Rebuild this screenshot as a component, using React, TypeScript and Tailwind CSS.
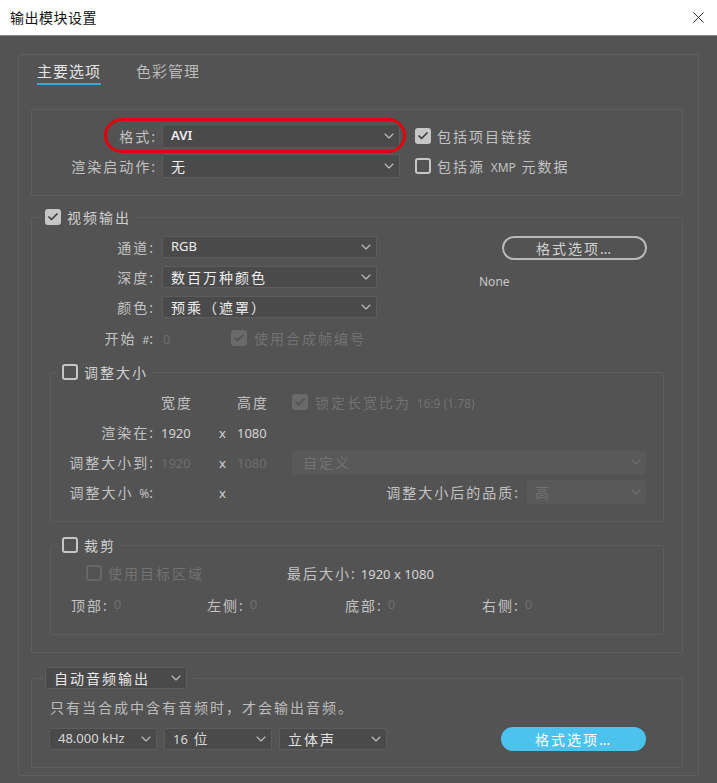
import React from 'react'
import { Check, ChevronDown, X } from 'lucide-react'
import clsx from 'clsx'

const font = "font-['Noto_Sans','Noto_Sans_CJK_SC',sans-serif]"

// CJK label text, slightly spaced like the Adobe dialog
const Cjk = ({ children, className }: { children: React.ReactNode; className?: string }) => (
  <span className={clsx('text-[14px] tracking-[2px] whitespace-nowrap', className ?? 'text-[#c2c2c2]')}>{children}</span>
)

const Num = ({ children, dim }: { children: React.ReactNode; dim?: boolean }) => (
  <span className={clsx('text-[13px] whitespace-nowrap', dim ? 'text-[#6e6e6e]' : 'text-[#d4d4d4]')}>{children}</span>
)

const Box = ({ checked, disabled }: { checked?: boolean; disabled?: boolean }) => {
  if (checked) {
    return (
      <span
        className={clsx(
          'w-4 h-4 shrink-0 rounded-[3px] flex items-center justify-center',
          disabled ? 'bg-[#6a6a6a]' : 'bg-[#c6c6c6]'
        )}
      >
        <Check size={12} strokeWidth={3.5} className={disabled ? 'text-[#525252]' : 'text-[#3c3c3c]'} />
      </span>
    )
  }
  return (
    <span
      className={clsx(
        'w-4 h-4 shrink-0 rounded-[3px] border-2',
        disabled ? 'border-[#676767]' : 'border-[#c6c6c6]'
      )}
    />
  )
}

const Select = ({
  children,
  className,
  disabled,
}: {
  children: React.ReactNode
  className: string
  disabled?: boolean
}) => (
  <div
    className={clsx(
      'flex items-center justify-between pl-[8px] pr-[2px] rounded-[2px] shrink-0',
      disabled ? 'bg-[#595959]' : 'bg-[#4a4a4a] border border-[#5c5c5c]',
      className
    )}
  >
    <div className="flex items-center">{children}</div>
    <ChevronDown size={16} strokeWidth={1.6} className={disabled ? 'text-[#707070]' : 'text-[#c0c0c0]'} />
  </div>
)

const App = () => {
  return (
    <div className={`relative w-[717px] h-[783px] overflow-hidden bg-[#535353] ${font}`}>
      {/* title bar */}
      <div className="h-[36px] bg-white border-b border-[#8a8a8a] flex items-center justify-between pl-[10px] pr-[9px]">
        <span className="text-[14px] tracking-[0.5px] text-[#111]">输出模块设置</span>
        <X size={19} strokeWidth={1.2} className="text-[#222]" />
      </div>

      <div className="pl-[18px] pt-[18px]">
        <div className="w-[681px] h-[722px] border border-[#5f5f5f] rounded-[3px] pl-[12px] flex flex-col">
          {/* tabs */}
          <div className="flex items-start pt-[6px] ml-[4px]">
            <div className="px-[2px] flex flex-col">
              <span className="text-[15px] leading-[20px] tracking-[1px] text-[#e4e4e4]">主要选项</span>
              <div className="mt-[2px] h-[2px] bg-[#3aa9dc]" />
            </div>
            <span className="ml-[33px] text-[15px] leading-[20px] tracking-[1px] text-[#bcbcbc]">色彩管理</span>
          </div>

          {/* format section */}
          <div className="mt-[24px] w-[652px] h-[87px] border border-[#5e5e5e] rounded-[2px] pt-[14px] flex flex-col gap-[6px]">
            <div className="flex items-center h-[24px]">
              <div className="w-[125px] text-right">
                <Cjk>格式:</Cjk>
              </div>
              <Select className="ml-[5px] w-[238px] h-[24px]">
                <span className="text-[13px] font-semibold text-[#eeeeee]">AVI</span>
              </Select>
              <div className="ml-[15px] flex items-center gap-[6px]">
                <Box checked />
                <Cjk>包括项目链接</Cjk>
              </div>
            </div>
            <div className="flex items-center h-[24px]">
              <div className="w-[125px] text-right">
                <Cjk>渲染启动作:</Cjk>
              </div>
              <Select className="ml-[5px] w-[238px] h-[24px]">
                <Cjk className="text-[#eeeeee]">无</Cjk>
              </Select>
              <div className="ml-[15px] flex items-center gap-[6px]">
                <Box />
                <Cjk>
                  包括源 <span className="text-[12px] tracking-normal">XMP</span> 元数据
                </Cjk>
              </div>
            </div>
          </div>

          {/* video output */}
          <fieldset className="mt-[12px] w-[652px] border border-[#5e5e5e] rounded-[2px]">
            <legend className="ml-[9px] px-[4px]">
              <div className="h-[18px] flex items-center gap-[6px]">
                <Box checked />
                <Cjk className="text-[#d0d0d0]">视频输出</Cjk>
              </div>
            </legend>
            <div className="pt-[10px] pb-[17px] flex flex-col">
              <div className="flex">
                <div className="flex flex-col gap-[8px]">
                  <div className="flex items-center h-[22px]">
                    <div className="w-[123px] text-right">
                      <Cjk>通道:</Cjk>
                    </div>
                    <Select className="ml-[7px] w-[215px] h-[22px]">
                      <span className="text-[13px] text-[#eeeeee]">RGB</span>
                    </Select>
                  </div>
                  <div className="flex items-center h-[22px]">
                    <div className="w-[123px] text-right">
                      <Cjk>深度:</Cjk>
                    </div>
                    <Select className="ml-[7px] w-[215px] h-[22px]">
                      <Cjk className="text-[#eeeeee]">数百万种颜色</Cjk>
                    </Select>
                  </div>
                  <div className="flex items-center h-[22px]">
                    <div className="w-[123px] text-right">
                      <Cjk>颜色:</Cjk>
                    </div>
                    <Select className="ml-[7px] w-[215px] h-[22px]">
                      <Cjk className="text-[#eeeeee]">预乘（遮罩）</Cjk>
                    </Select>
                  </div>
                </div>
                <div className="ml-[102px] flex flex-col items-start">
                  <button className="ml-[23px] w-[145px] h-[24px] rounded-full border-2 border-[#b8b8b8] flex items-center justify-center">
                    <Cjk className="text-[#d2d2d2]">格式选项…</Cjk>
                  </button>
                  <span className="mt-[14px] text-[12px] leading-[16px] text-[#c8c8c8]">None</span>
                </div>
              </div>

              <div className="mt-[10px] h-[20px] flex items-center">
                <div className="w-[123px] text-right">
                  <Cjk>
                    开始 <span className="text-[11px] tracking-normal">#</span>:
                  </Cjk>
                </div>
                <span className="ml-[8px] w-[68px]">
                  <Num dim>0</Num>
                </span>
                <Box checked disabled />
                <Cjk className="ml-[7px] text-[#727272]">使用合成帧编号</Cjk>
              </div>

              {/* resize */}
              <fieldset className="mt-[15px] ml-[18px] w-[614px] border border-[#5e5e5e] rounded-[2px]">
                <legend className="ml-[7px] px-[4px]">
                  <div className="h-[18px] flex items-center gap-[6px]">
                    <Box />
                    <Cjk className="text-[#d0d0d0]">调整大小</Cjk>
                  </div>
                </legend>
                <div className="pt-[9px] pb-[17px] flex flex-col gap-[6px]">
                  <div className="flex items-center h-[24px]">
                    <div className="w-[104px]" />
                    <div className="ml-[6px] w-[76px]">
                      <Cjk>宽度</Cjk>
                    </div>
                    <div className="w-[55px]">
                      <Cjk>高度</Cjk>
                    </div>
                    <div className="flex items-center gap-[7px]">
                      <Box checked disabled />
                      <Cjk className="text-[#727272]">
                        锁定长宽比为 <span className="text-[12px] tracking-normal">16:9 (1.78)</span>
                      </Cjk>
                    </div>
                  </div>
                  <div className="flex items-center h-[24px]">
                    <div className="w-[104px] text-right">
                      <Cjk>渲染在:</Cjk>
                    </div>
                    <div className="ml-[6px] w-[58px]">
                      <Num>1920</Num>
                    </div>
                    <div className="w-[18px]">
                      <Num>x</Num>
                    </div>
                    <div className="w-[55px]">
                      <Num>1080</Num>
                    </div>
                  </div>
                  <div className="flex items-center h-[24px]">
                    <div className="w-[104px] text-right">
                      <Cjk>调整大小到:</Cjk>
                    </div>
                    <div className="ml-[6px] w-[58px]">
                      <Num dim>1920</Num>
                    </div>
                    <div className="w-[18px]">
                      <Num>x</Num>
                    </div>
                    <div className="w-[55px]">
                      <Num dim>1080</Num>
                    </div>
                    <Select disabled className="w-[354px] h-[23px] pl-[11px]">
                      <Cjk className="text-[#727272]">自定义</Cjk>
                    </Select>
                  </div>
                  <div className="flex items-center h-[24px]">
                    <div className="w-[104px] text-right">
                      <Cjk>
                        调整大小 <span className="tracking-normal text-[12px]">%</span>:
                      </Cjk>
                    </div>
                    <div className="ml-[6px] w-[58px]" />
                    <div className="w-[18px]">
                      <Num>x</Num>
                    </div>
                    <div className="w-[55px]" />
                    <div className="w-[354px] flex items-center justify-end">
                      <Cjk>调整大小后的品质:</Cjk>
                      <Select disabled className="ml-[7px] w-[119px] h-[24px]">
                        <Cjk className="text-[#727272]">高</Cjk>
                      </Select>
                    </div>
                  </div>
                </div>
              </fieldset>

              {/* crop */}
              <fieldset className="mt-[14px] ml-[18px] w-[614px] border border-[#5e5e5e] rounded-[2px]">
                <legend className="ml-[7px] px-[4px]">
                  <div className="h-[18px] flex items-center gap-[6px]">
                    <Box />
                    <Cjk className="text-[#d0d0d0]">裁剪</Cjk>
                  </div>
                </legend>
                <div className="pt-[9px] pb-[19px] flex flex-col gap-[12px]">
                  <div className="h-[20px] flex items-center pl-[35px]">
                    <div className="w-[201px] flex items-center gap-[6px]">
                      <Box disabled />
                      <Cjk className="text-[#727272]">使用目标区域</Cjk>
                    </div>
                    <Cjk>最后大小:</Cjk>
                    <span className="ml-[4px]">
                      <Num>1920 x 1080</Num>
                    </span>
                  </div>
                  <div className="h-[20px] flex items-center pl-[20px]">
                    <div className="w-[136px] flex items-center gap-[5px]">
                      <Cjk>顶部:</Cjk>
                      <Num dim>0</Num>
                    </div>
                    <div className="w-[138px] flex items-center gap-[5px]">
                      <Cjk>左侧:</Cjk>
                      <Num dim>0</Num>
                    </div>
                    <div className="w-[137px] flex items-center gap-[5px]">
                      <Cjk>底部:</Cjk>
                      <Num dim>0</Num>
                    </div>
                    <div className="flex items-center gap-[5px]">
                      <Cjk>右侧:</Cjk>
                      <Num dim>0</Num>
                    </div>
                  </div>
                </div>
              </fieldset>
            </div>
          </fieldset>

          {/* audio output */}
          <fieldset className="mt-[14px] w-[652px] border border-[#5e5e5e] rounded-[2px]">
            <legend className="ml-[11px] pl-[2px] pr-[6px]">
              <Select className="w-[142px] h-[22px]">
                <Cjk className="text-[#e8e8e8]">自动音频输出</Cjk>
              </Select>
            </legend>
            <div className="pt-[8px] pb-[16px] pl-[17px] flex flex-col">
              <div className="h-[20px] flex items-center pl-[1px]">
                <Cjk className="text-[#bdbdbd]">只有当合成中含有音频时，才会输出音频。</Cjk>
              </div>
              <div className="mt-[10px] h-[24px] flex items-center gap-[7px]">
                <Select className="w-[108px] h-[22px]">
                  <span className="text-[13px] text-[#d8d8d8]">48.000 kHz</span>
                </Select>
                <Select className="w-[108px] h-[22px]">
                  <Cjk className="text-[#d8d8d8]">
                    <span className="tracking-normal text-[13px]">16</span> 位
                  </Cjk>
                </Select>
                <Select className="w-[108px] h-[22px]">
                  <Cjk className="text-[#e0e0e0]">立体声</Cjk>
                </Select>
                <button className="ml-auto mr-[36px] w-[145px] h-[24px] rounded-full bg-[#4cc2ee] flex items-center justify-center">
                  <Cjk className="text-white">格式选项…</Cjk>
                </button>
              </div>
            </div>
          </fieldset>
        </div>
      </div>

      {/* red highlight annotation around the format row */}
      <div className="absolute left-[104px] top-[118px] w-[302px] h-[35px] rounded-full border-[3px] border-[#e3000c] pointer-events-none" />
    </div>
  )
}

export default App
